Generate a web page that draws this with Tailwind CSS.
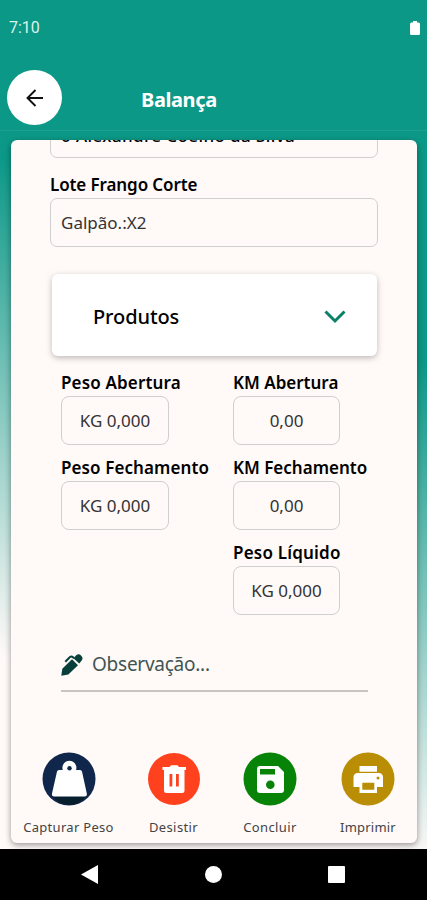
<!DOCTYPE html>
<html lang="pt-BR">
<head>
<meta charset="utf-8">
<title>Balança</title>
<script src="https://cdn.jsdelivr.net/npm/@tailwindcss/browser@4"></script>
</head>
<body class="h-[900px] w-[427px] overflow-hidden bg-[linear-gradient(206deg,#0c9887_0%,#0c9887_33%,#fff9f8_78%)] font-['Noto_Sans',sans-serif] text-black">
<div class="flex h-[900px] flex-col">
  <header class="h-[131px] shrink-0 border-b border-[#1c9f8e] bg-[#0c9887] text-white">
    <div class="flex h-[56px] items-center justify-between pr-[7px] pl-[9px]">
      <span class="font-['Roboto'] text-[16px] text-[#d9f3ea]">7:10</span>
      <svg class="h-[14px] w-[10px]" viewBox="0 0 10 14" fill="#fff"><path d="M3 0h4v1.500h1.500Q10 1.500 10 3v9.500Q10 14 8.500 14h-7Q0 14 0 12.500V3q0-1.500 1.500-1.500H3z"/></svg>
    </div>
    <div class="flex h-[74px] items-start pt-[14px] pl-[7px]">
      <div class="flex size-[55px] items-center justify-center rounded-full bg-white">
        <svg class="size-[18px]" viewBox="0 0 18 18" fill="none" stroke="#111" stroke-width="1.900"><path d="M17 9H2M9.500 1 1.500 9l8 8"/></svg>
      </div>
      <h1 class="mt-[16px] ml-[79px] text-[20px] leading-[28px] font-bold tracking-[-0.4px]">Balança</h1>
    </div>
  </header>

  <main class="mr-[10px] ml-[11px] mt-[9px] flex h-[703px] shrink-0 flex-col overflow-hidden rounded-[6px] bg-[#fff9f8] shadow-[0_2px_6px_rgba(0,0,0,0.4)]">
    <div class="mx-[39px] -mt-[31px] flex h-[49px] shrink-0 items-center rounded-[7px] border border-[#cfcfcf] pt-[5px] pl-[10px] text-[17px] font-medium tracking-[0.4px] whitespace-nowrap"><span>0 Alexandre Coelho da Silva</span></div>
    <p class="mt-[14px] ml-[39px] h-[26px] shrink-0 text-[17px] leading-[25px] font-semibold tracking-[-0.1px]">Lote Frango Corte</p>
    <div class="mx-[39px] flex h-[49px] shrink-0 items-center rounded-[7px] border border-[#cfcfcf] pt-[1px] pl-[10px] text-[17px] text-[#333]">Galpão.:X2</div>

    <section class="mt-[27px] mr-[40px] ml-[41px] flex h-[82px] shrink-0 items-center justify-between rounded-[6px] bg-white pt-[3px] pr-[31px] pl-[41px] shadow-[0_2px_6px_rgba(0,0,0,0.26)]">
      <span class="text-[20px] font-medium tracking-[-0.1px]">Produtos</span>
      <svg class="h-[14px] w-[22px]" viewBox="0 0 22 14" fill="none" stroke="#0b8068" stroke-width="3"><path d="M1.500 1.500 11 11l9.500-9.500"/></svg>
    </section>

    <section class="mt-[14px] ml-[50px] grid grid-cols-[172px_1fr] gap-y-[10px] text-[17px]">
      <div><p class="h-[26px] leading-[25px] font-semibold tracking-[0.15px]">Peso Abertura</p><div class="flex h-[49px] w-[108px] items-center justify-center rounded-[8px] border border-[#cfcfcf] pt-[1px] text-[#333]">KG 0,000</div></div>
      <div><p class="h-[26px] leading-[25px] font-semibold">KM Abertura</p><div class="flex h-[49px] w-[107px] items-center justify-center rounded-[8px] border border-[#cfcfcf] pt-[1px] text-[#333]">0,00</div></div>
      <div><p class="h-[26px] leading-[25px] font-semibold tracking-[0.1px]">Peso Fechamento</p><div class="flex h-[49px] w-[108px] items-center justify-center rounded-[8px] border border-[#cfcfcf] pt-[1px] text-[#333]">KG 0,000</div></div>
      <div><p class="h-[26px] leading-[25px] font-semibold">KM Fechamento</p><div class="flex h-[49px] w-[107px] items-center justify-center rounded-[8px] border border-[#cfcfcf] pt-[1px] text-[#333]">0,00</div></div>
      <div class="col-start-2"><p class="h-[26px] leading-[25px] font-semibold tracking-[0.2px]">Peso Líquido</p><div class="flex h-[49px] w-[107px] items-center justify-center rounded-[8px] border border-[#cfcfcf] pt-[1px] text-[#333]">KG 0,000</div></div>
    </section>

    <div class="mr-[49px] ml-[50px] mt-[23px] flex h-[54px] shrink-0 items-center gap-[9px] border-b-2 border-[#c9c3c2] pt-[1px]">
      <svg class="size-[22px]" viewBox="0 0 22 22" fill="#073f3a"><path d="M.3 21.700 1.300 14.800 11 5.300 17 11.300 7.300 20.500z"/><path d="M12.500 4.200 15 1.500q2.800-2.300 5 0 2.800 2.500.5 5.200L18.200 9.500z"/><path d="M4.300 7.800 9 3q1.500-1.200 3 .3l1 1" fill="none" stroke="#073f3a" stroke-width="2"/></svg>
      <span class="text-[19px] tracking-[-0.25px] text-[#405552]">Observação...</span>
    </div>

    <nav class="mt-[60px] flex shrink-0 text-[13px] leading-[20px] text-[#444]">
      <div class="flex w-[115px] flex-col items-center gap-[11px]">
        <svg class="size-[54px]" viewBox="0 0 54 54"><circle cx="27" cy="27" r="26.500" fill="#10264a"/><path d="M11 44.800h33q-7 8-16.500 8T11 44.800z" fill="#071e2d"/><path d="M15 19.500Q15.300 18 17 18h3.800a7 7 0 1 1 13.200 0h4q1.700 0 2 1.500l4.800 22q.5 3-2 3H12q-2.500 0-2-3z" fill="#fff"/><circle cx="27.500" cy="16.200" r="2.200" fill="#10264a"/></svg>
        <span class="tracking-[0.3px]">Capturar Peso</span>
      </div>
      <div class="flex w-[95px] flex-col items-center gap-[11px]">
        <svg class="size-[54px]" viewBox="0 0 54 54"><circle cx="27" cy="27" r="26" fill="#ff421d"/><path fill="#fff" fill-rule="evenodd" d="M15.500 15h7l1.500-1.800h6.500L32 15h7v3h-1.500v20.500q0 2.500-2.500 2.500H19.500Q17 41 17 38.500V18h-1.500zM22.500 22v12.500h2.800V22zm6.500 0v12.500h2.800V22z"/></svg>
        <span class="tracking-[0.4px]">Desistir</span>
      </div>
      <div class="flex w-[98px] flex-col items-center gap-[11px]">
        <svg class="size-[54px]" viewBox="0 0 54 54"><circle cx="27" cy="27" r="26.500" fill="#078407"/><path fill="#fff" fill-rule="evenodd" d="M17 14h18l6 6v18q0 3-3 3H17q-3 0-3-3V17q0-3 3-3zm0 3v5.500h15V17z"/><circle cx="27.300" cy="32.700" r="4.300" fill="#078407"/></svg>
        <span class="tracking-[0.4px]">Concluir</span>
      </div>
      <div class="flex w-[98px] flex-col items-center gap-[11px]">
        <svg class="size-[54px]" viewBox="0 0 54 54"><circle cx="27" cy="27" r="26.500" fill="#b98e05"/><path fill="#fff" fill-rule="evenodd" d="M18.500 14h17.500v5.700H18.500zM17 21h20.500q4.500 0 4.500 4.500V35h-6v6H18.500v-6h-6v-9.500Q12.500 21 17 21zm4.300 9.800v7h12v-7z"/><circle cx="37" cy="26" r="1.500" fill="#b98e05"/></svg>
        <span class="tracking-[0.2px]">Imprimir</span>
      </div>
    </nav>
  </main>

  <footer class="mt-auto flex h-[51px] shrink-0 items-center bg-black">
    <svg class="ml-[81px] h-[19px] w-[17px]" viewBox="0 0 17 19" fill="#fff"><path d="M17 0v19L0 9.500z"/></svg>
    <div class="ml-[107px] size-[17px] rounded-full bg-white"></div>
    <div class="ml-[106px] size-[17px] rounded-[1px] bg-white"></div>
  </footer>
</div>
</body>
</html>
